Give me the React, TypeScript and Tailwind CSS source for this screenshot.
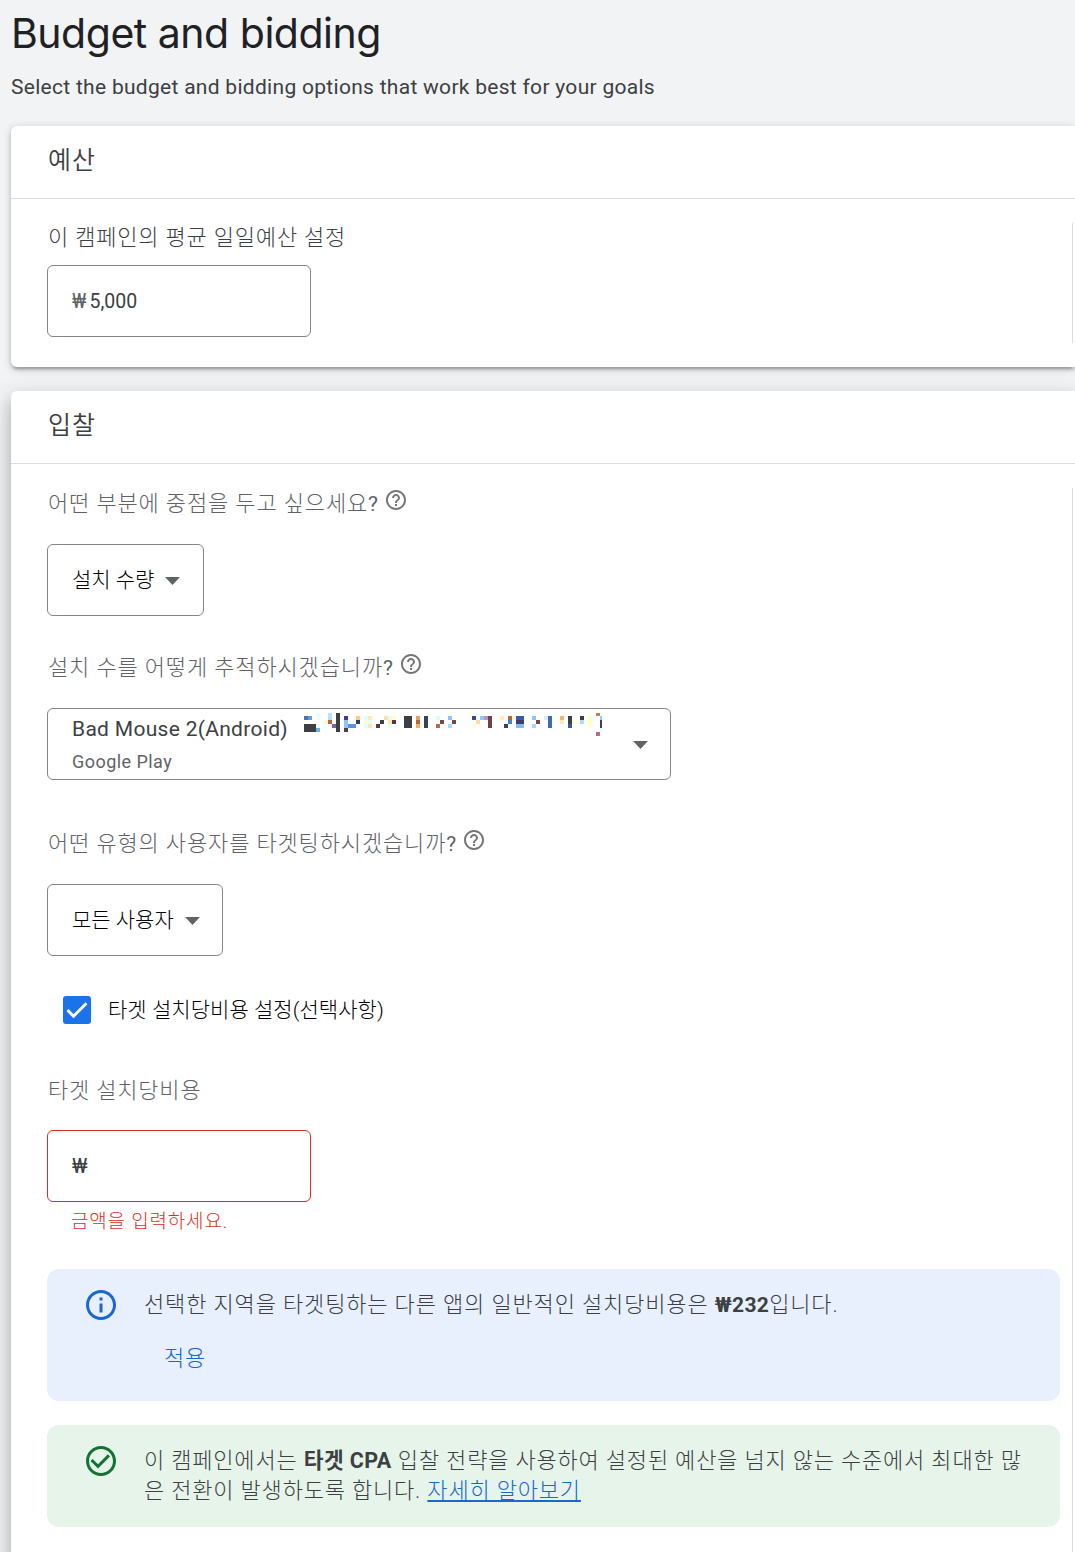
import type { JSX, ReactNode } from 'react';
import { clsx } from 'clsx';
import { twMerge } from 'tailwind-merge';
import { MdCheckCircleOutline, MdHelpOutline, MdInfoOutline } from 'react-icons/md';

// Redacted account name: [column, row, colour, width, height] in 4px cells
type Cell = [number, number, string, number?, number?];

const MOSAIC: Cell[] = [
  [0, 0, '#fffbd6'],
  [0, 1, '#4472c0'],
  [1, 1, '#6b9ad0'],
  [0, 3, '#3c4043', 3, 2],
  [3, 0, '#e6ffff', 1, 2],
  [3, 3, '#e6ffff'],
  [3, 4, '#74aee8'],
  [5, 2, '#fffbd6'],
  [6, 0, '#b4e2ff', 1, 2],
  [6, 2, '#b5673c'],
  [7, 3, '#84619a'],
  [8, 0, '#3c4043', 1, 5],
  [10, 1, '#3c3f88'],
  [10, 2, '#8cc2ff', 1, 2],
  [10, 4, '#5a3a42'],
  [11, 3, '#5b93d8', 2],
  [13, 1, '#ffc890'],
  [13, 2, '#333d5c'],
  [15, 1, '#deffff'],
  [16, 1, '#ffe7b2'],
  [15, 2, '#fffadb'],
  [16, 2, '#e8ffff'],
  [15, 3, '#deffff'],
  [16, 3, '#ffe7b2'],
  [18, 3, '#5a3a42'],
  [19, 2, '#3c4043'],
  [20, 1, '#ffdca8'],
  [21, 1, '#deffff'],
  [22, 1, '#fffbd6'],
  [21, 2, '#ffe7b2'],
  [22, 2, '#523c44'],
  [21, 3, '#deffff'],
  [25, 1, '#3c4043', 2, 3],
  [28, 1, '#e3a462'],
  [28, 2, '#b5673c'],
  [28, 3, '#f4ae60'],
  [30, 1, '#3a4356', 1, 3],
  [33, 1, '#d0ffff'],
  [33, 3, '#b96b42'],
  [34, 2, '#704a4a'],
  [36, 1, '#8cc2ff'],
  [36, 3, '#a4d8ff'],
  [37, 2, '#704a4a'],
  [42, 1, '#3c4796'],
  [42, 3, '#fffbe4'],
  [43, 2, '#ffdca8'],
  [44, 1, '#90c8ff'],
  [45, 1, '#b598b8'],
  [46, 1, '#733e44', 1, 3],
  [49, 1, '#ffecbc'],
  [50, 3, '#3a4170'],
  [51, 1, '#b5673c'],
  [51, 2, '#4288c8'],
  [52, 1, '#fff8d0'],
  [53, 1, '#3a59a8', 2],
  [53, 2, '#3c3f66', 2],
  [53, 3, '#82b9f0', 2],
  [57, 1, '#8cc2ff'],
  [57, 3, '#a4d8ff'],
  [58, 2, '#704a4a'],
  [60, 1, '#dceafa'],
  [61, 1, '#3e6cb2', 1, 3],
  [64, 1, '#f5b478'],
  [64, 2, '#ffe7b2'],
  [66, 1, '#3c4043', 1, 2],
  [66, 3, '#3a59a0'],
  [67, 2, '#fffce4', 2],
  [69, 1, '#3c4043'],
  [69, 2, '#b0dcff'],
  [71, 1, '#ffffc8', 1, 3],
  [73, 0, '#c28052'],
  [73, 5, '#b0708a'],
  [74, 1, '#90c8ff', 0.5],
  [74, 2, '#3c3f66', 0.5, 2],
  [74, 4, '#deffff', 0.5],
];

function Mosaic(): JSX.Element {
  return (
    <svg
      className="mt-[3px] ml-4 shrink-0"
      width="300"
      height="24"
      viewBox="0 0 300 24"
      shapeRendering="crispEdges"
    >
      {MOSAIC.map(([x, y, fill, w = 1, h = 1]) => (
        <rect
          key={`${x}-${y}`}
          x={x * 4}
          y={y === 0 ? 1 : y * 4}
          width={w * 4}
          height={y === 0 ? h * 4 - 1 : h * 4}
          fill={fill}
        />
      ))}
    </svg>
  );
}

function Caret(): JSX.Element {
  return (
    <svg className="mt-px shrink-0" width="15" height="8" viewBox="0 0 15 8">
      <path d="M0 0h15L7.5 8z" fill="#5f6368" />
    </svg>
  );
}

function Card({ title, className, children }: { title: string; className?: string; children: ReactNode }): JSX.Element {
  return (
    <section className={clsx('rounded-l-md bg-white', className)}>
      <h2 className="flex h-[73px] items-center border-b border-[#dadce0] pb-0.5 pl-[37px] text-[25px] font-[350] tracking-[1px] text-[#3c4043]">
        {title}
      </h2>
      {children}
    </section>
  );
}

function Label({ className, children }: { className?: string; children: ReactNode }): JSX.Element {
  return (
    <div
      className={twMerge(
        'flex h-[30px] items-center pl-px text-[22px] tracking-[0.8px] whitespace-nowrap text-[#5f6368]',
        className,
      )}
    >
      <span className="pt-0.5">{children}</span>
    </div>
  );
}

// Label phrased as a question, followed by the help icon
function Question({ className, children }: { className?: string; children: ReactNode }): JSX.Element {
  return (
    <div className={clsx('flex', className)}>
      <Label className="tracking-[0.85px]">
        {children}
        <span className="text-[21px] font-normal">?</span>
      </Label>
      <MdHelpOutline className="ml-[5px] size-6 text-[#757575]" />
    </div>
  );
}

export default function App(): JSX.Element {
  return (
    <main className="h-[1552px] w-[1075px] overflow-hidden bg-[#f1f3f4] pl-[11px] font-[Roboto,'Noto_Sans_CJK_KR',sans-serif] font-light">
      <header className="h-[126px] pt-1">
        <h1 className="font-[Inter,sans-serif] text-[41px] leading-[58px] font-normal tracking-[-0.48px] text-[#202124]">
          Budget and bidding
        </h1>
        <p className="mt-2.5 text-[21px] leading-[30px] font-normal tracking-[0.29px] text-[#3c4043]">
          Select the budget and bidding options that work best for your goals
        </p>
      </header>

      <Card
        title="예산"
        className="h-[241px] shadow-[0_3px_3px_rgba(0,0,0,0.14),0_5px_2px_-3px_rgba(0,0,0,0.12),0_2px_8px_rgba(0,0,0,0.2)]"
      >
        <div className="mt-6 mr-0.5 ml-9 h-[120px] border-r border-[#dadce0]">
          <Label className="h-[42px] pb-4 text-[#3c4043]">이 캠페인의 평균 일일예산 설정</Label>
          <div className="flex h-[72px] w-[264px] items-center rounded-md border border-[#80868b] pt-0.5 pl-6 text-[19.5px] font-normal text-[#3c4043]">
            <span className="mr-[3px] text-[#5f6368]">₩</span>
            5,000
          </div>
        </div>
      </Card>

      <Card
        title="입찰"
        className="mt-6 h-[1200px] shadow-[0_8px_8px_-5px_rgba(0,0,0,0.2),0_12px_15px_2px_rgba(0,0,0,0.14),0_5px_21px_3px_rgba(0,0,0,0.12)]"
      >
        <div className="mt-6 mr-0.5 ml-9 h-[1120px] border-r border-[#dadce0]">
          <Question>어떤 부분에 중점을 두고 싶으세요</Question>
          <div className="mt-[26px] flex h-[72px] w-[157px] items-center justify-between rounded-md border border-[#80868b] pr-[23px] pl-6 text-[21px] whitespace-nowrap text-black">
            <span className="pt-0.5">설치 수량</span>
            <Caret />
          </div>

          <Question className="mt-9">설치 수를 어떻게 추적하시겠습니까</Question>
          <div className="mt-[26px] flex h-[72px] w-[624px] items-center justify-between rounded-md border border-[#80868b] pr-[22px] pl-6 font-normal">
            <div>
              <div className="flex h-9 items-start text-[21px] leading-10 tracking-[0.3px] text-[#3c4043]">
                <span>Bad Mouse 2(Android)</span>
                <Mosaic />
              </div>
              <div className="h-[34px] text-lg leading-[34px] tracking-[0.45px] text-[#5f6368]">Google Play</div>
            </div>
            <Caret />
          </div>

          <Question className="mt-12">어떤 유형의 사용자를 타겟팅하시겠습니까</Question>
          <div className="mt-[26px] flex h-[72px] w-[176px] items-center justify-between rounded-md border border-[#80868b] pr-[22px] pl-6 text-[21px] whitespace-nowrap text-black">
            <span className="pt-0.5">모든 사용자</span>
            <Caret />
          </div>

          <div className="mt-10 ml-4 flex h-7 items-center gap-[17px] text-[21px] whitespace-nowrap text-black">
            <span className="flex size-7 items-center justify-center rounded-[3px] bg-[#1a73e8]">
              <svg width="22" height="22" viewBox="0 0 22 22" fill="none" stroke="#fff" strokeWidth="3">
                <path d="M1.5 11l6 6.2L20.5 4.2" />
              </svg>
            </span>
            <span className="pt-0.5 tracking-[0.05px]">타겟 설치당비용 설정(선택사항)</span>
          </div>

          <Label className="mt-[50px]">타겟 설치당비용</Label>
          <div className="mt-[26px] flex h-[72px] w-[264px] items-center rounded-md border border-[#d93025] pt-0.5 pl-6 text-[21px] font-normal text-[#3c4043]">
            ₩
          </div>
          <p className="mt-2 pl-6 text-[19px] leading-6 tracking-[0.8px] text-[#d93025]">금액을 입력하세요.</p>

          <div className="mt-[35px] mr-3 flex h-[132px] rounded-xl bg-[#e8f0fe] pt-[18px] pl-9 text-[22px] tracking-[0.85px] text-[#3c4043]">
            <MdInfoOutline className="size-9 shrink-0 text-[#1967d2]" />
            <div className="ml-[25px]">
              <p className="leading-9">
                선택한 지역을 타겟팅하는 다른 앱의 일반적인 설치당비용은{' '}
                <b className="text-[21px] font-bold tracking-[0.3px]">₩232</b>입니다.
              </p>
              <button type="button" className="mt-5 ml-5 leading-8 text-[#1967d2]">
                적용
              </button>
            </div>
          </div>

          <div className="mt-6 mr-3 flex h-[102px] rounded-xl bg-[#e6f4ea] pt-[18px] pl-9 text-[22px] tracking-[0.81px] text-[#3c4043]">
            <MdCheckCircleOutline className="size-9 shrink-0 text-[#137333]" />
            <p className="mt-[3px] ml-[25px] leading-[30px] whitespace-nowrap">
              이 캠페인에서는 <b className="text-[21.5px] font-bold tracking-[0.4px]">타겟 CPA</b> 입찰 전략을 사용하여 설정된 예산을 넘지 않는 수준에서 최대한 많
              <br />
              은 전환이 발생하도록 합니다.{' '}
              <a className="text-[#1967d2] underline decoration-2 underline-offset-2">자세히 알아보기</a>
            </p>
          </div>
        </div>
      </Card>
    </main>
  );
}
